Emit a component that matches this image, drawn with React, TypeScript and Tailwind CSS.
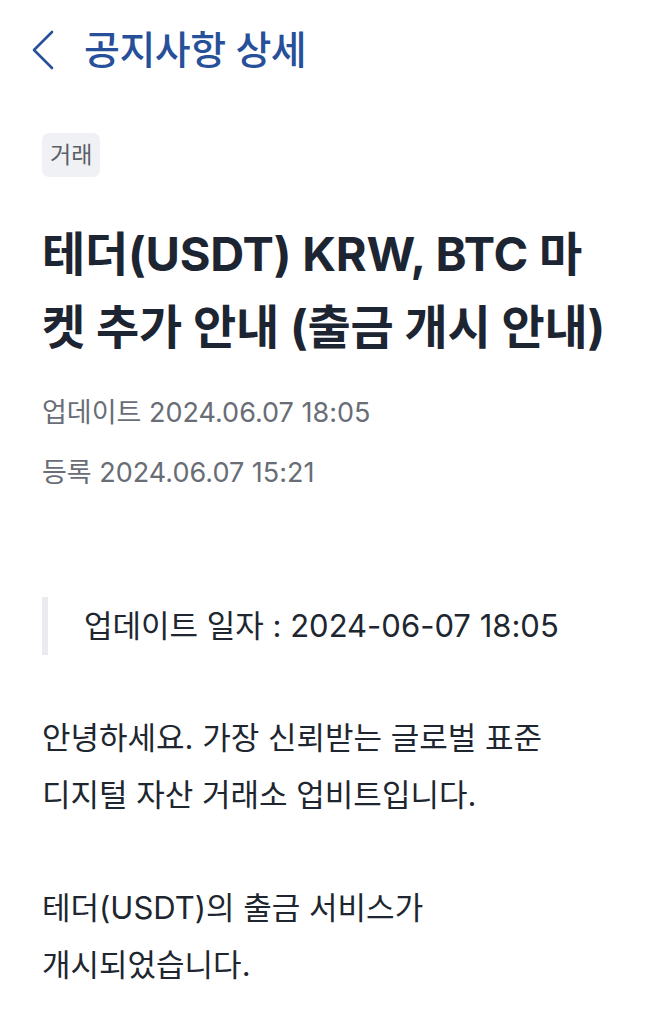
// Notice detail page
export default function App() {
  return (
    <div
      className="min-h-screen bg-white text-[#232a34]"
      style={{ fontFamily: 'Inter, "Noto Sans CJK KR", sans-serif' }}
    >
      {/* Header */}
      <header className="flex items-center h-[100px] pl-[32px]">
        <svg width="22" height="40" viewBox="0 0 22 40" fill="none" className="text-[#27509a]">
          <polyline
            points="20,2 2,20 20,38"
            stroke="currentColor"
            strokeWidth="2.6"
            strokeLinecap="round"
            strokeLinejoin="round"
          />
        </svg>
        <h1 className="ml-[30px] text-[39px] font-medium text-[#27509a] tracking-[-0.5px]">
          공지사항 상세
        </h1>
      </header>

      <main className="px-[42px]">
        {/* Category */}
        <div className="mt-[33px]">
          <span className="inline-flex items-center h-[44px] px-[8px] rounded-[7px] bg-[#f0f1f4] text-[23px] text-[#5a5f67]">
            거래
          </span>
        </div>

        {/* Title */}
        <h2 className="mt-[40px] text-[47px] leading-[73px] font-bold text-[#1d2532] tracking-[-0.2px]">
          테더(USDT) KRW, BTC 마<br />켓 추가 안내 (출금 개시 안내)
        </h2>

        {/* Dates */}
        <div className="mt-[20px] text-[27px] leading-[60px] text-[#686d76]">
          <p>업데이트 2024.06.07 18:05</p>
          <p>등록 2024.06.07 15:21</p>
        </div>

        {/* Quote */}
        <blockquote className="mt-[94px] border-l-[6px] border-[#e9ebee] pl-[36px] h-[58px] flex items-center text-[31px] text-[#20262f]">
          업데이트 일자 : 2024-06-07 18:05
        </blockquote>

        {/* Body */}
        <div className="mt-[54px] text-[31px] leading-[57px] text-[#20262f]">
          <p>
            안녕하세요. 가장 신뢰받는 글로벌 표준
            <br />
            디지털 자산 거래소 업비트입니다.
          </p>
          <p className="mt-[56px]">
            테더(USDT)의 출금 서비스가
            <br />
            개시되었습니다.
          </p>
        </div>
      </main>
    </div>
  );
}
